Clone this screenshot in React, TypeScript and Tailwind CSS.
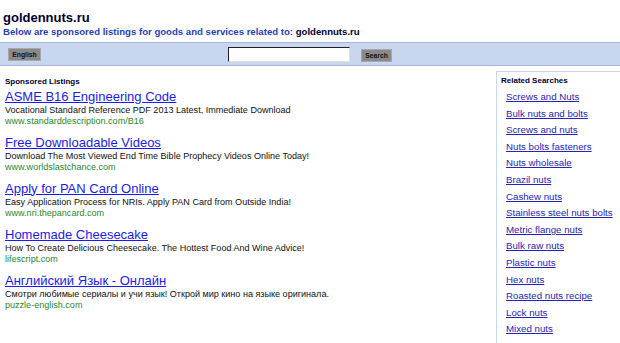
import React from "react";

const ads = [
  {
    title: "ASME B16 Engineering Code",
    desc: "Vocational Standard Reference PDF 2013 Latest, Immediate Download",
    url: "www.standarddescription.com/B16",
  },
  {
    title: "Free Downloadable Videos",
    desc: "Download The Most Viewed End Time Bible Prophecy Videos Online Today!",
    url: "www.worldslastchance.com",
  },
  {
    title: "Apply for PAN Card Online",
    desc: "Easy Application Process for NRIs. Apply PAN Card from Outside India!",
    url: "www.nri.thepancard.com",
  },
  {
    title: "Homemade Cheesecake",
    desc: "How To Create Delicious Cheesecake. The Hottest Food And Wine Advice!",
    url: "lifescript.com",
  },
  {
    title: "Английский Язык - Онлайн",
    desc: "Смотри любимые сериалы и учи язык! Открой мир кино на языке оригинала.",
    url: "puzzle-english.com",
  },
];

const related = [
  "Screws and Nuts",
  "Bulk nuts and bolts",
  "Screws and nuts",
  "Nuts bolts fasteners",
  "Nuts wholesale",
  "Brazil nuts",
  "Cashew nuts",
  "Stainless steel nuts bolts",
  "Metric flange nuts",
  "Bulk raw nuts",
  "Plastic nuts",
  "Hex nuts",
  "Roasted nuts recipe",
  "Lock nuts",
  "Mixed nuts",
];

export default function App() {
  return (
    <div
      className="w-[620px] h-[343px] overflow-hidden bg-white"
      style={{ fontFamily: '"Liberation Sans", Arial, sans-serif' }}
    >
      <div className="pl-[3px] pt-[10px]">
        <div className="text-[13px] leading-[15px] font-bold text-[#000033]">goldennuts.ru</div>
        <div className="mt-[1px] text-[9.6px] leading-[12px] font-bold text-[#1f3fc0] whitespace-nowrap">
          Below are sponsored listings for goods and services related to:{" "}
          <span className="text-[#000033]">goldennuts.ru</span>
        </div>
      </div>

      <div className="mt-[4px] h-[24px] bg-[#c8d6f0] border-y border-[#a3b6e4] flex items-center">
        <button className="ml-[8px] w-[33px] h-[13px] bg-[#8a8a8a] border border-[#a8a8a8] text-[6.8px] leading-[11px] font-bold text-[#111] flex items-center justify-center">
          English
        </button>
        <input
          className="ml-[187px] w-[122px] h-[15px] bg-white border border-t-[#222] border-l-[#222] border-b-[#e0e0e0] border-r-[#e0e0e0] outline-none"
          type="text"
        />
        <button className="ml-[11px] mt-[3px] w-[31px] h-[13px] bg-[#8a8a8a] border border-[#a8a8a8] text-[6.8px] leading-[11px] font-bold text-[#111] flex items-center justify-center">
          Search
        </button>
      </div>

      <div className="flex">
        <div className="w-[496px] shrink-0 pl-[5px] pt-[11px]">
          <div className="text-[8px] leading-[9px] font-bold text-[#000033] mb-[2.5px]">Sponsored Listings</div>
          {ads.map((a) => (
            <div key={a.title} className="mb-[9px] h-[37px]">
              <a href="#" className="block text-[13px] leading-[16px] text-[#1a1af2] underline whitespace-nowrap">
                {a.title}
              </a>
              <div className="text-[9.05px] leading-[11px] text-[#111] whitespace-nowrap">{a.desc}</div>
              <div className="text-[9.05px] leading-[10px] text-[#2a8a2a] whitespace-nowrap">{a.url}</div>
            </div>
          ))}
        </div>
        <div className="mt-[5px] w-[124px] shrink-0 h-[300px] border-l border-t border-[#c8d6f0] pt-[4px]">
          <div className="pl-[4px] text-[8px] leading-[9px] font-bold text-[#000033]">Related Searches</div>
          <div className="mt-[4px] pl-[9px]">
            {related.map((r) => (
              <a
                key={r}
                href="#"
                className="block text-[9.7px] leading-[16.6px] text-[#2424b8] underline whitespace-nowrap"
              >
                {r}
              </a>
            ))}
          </div>
        </div>
      </div>
    </div>
  );
}
